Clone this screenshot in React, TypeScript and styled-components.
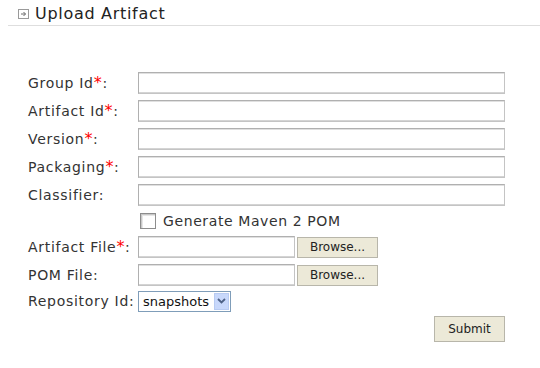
import styled, { createGlobalStyle } from "styled-components";

const GlobalStyle = createGlobalStyle`
  html, body {
    margin: 0;
    padding: 0;
    background: #ffffff;
  }
  body {
    font-family: "DejaVu Sans", Verdana, sans-serif;
    color: #333;
  }
`;

const Page = styled.div`
  width: 540px;
  height: 368px;
  padding: 0 0 0 8px;
  box-sizing: border-box;
`;

const Header = styled.div`
  display: flex;
  align-items: center;
  gap: 6px;
  height: 26px;
  padding: 3px 0 0 10px;
  box-sizing: border-box;
  border-bottom: 1px solid #dedede;
`;

const Title = styled.h2`
  margin: 0;
  font-size: 16px;
  font-weight: normal;
  letter-spacing: 0.7px;
  color: #222;
  line-height: 18px;
`;

const Form = styled.form`
  display: flex;
  flex-direction: column;
  margin-top: 43px;
  padding-left: 20px;
`;

const Row = styled.div<{ $h?: number; $pt?: number }>`
  display: grid;
  grid-template-columns: 110px 367px;
  align-items: center;
  height: ${(p) => p.$h ?? 28}px;
  padding-top: ${(p) => p.$pt ?? 0}px;
  box-sizing: border-box;
`;

const Label = styled.label`
  font-size: 14px;
  letter-spacing: 0.7px;
  color: #333;
  white-space: nowrap;
`;

const Req = styled.span`
  color: #f00;
  font-size: 16px;
  line-height: 14px;
`;

const TextInput = styled.input<{ $w?: number }>`
  box-sizing: border-box;
  width: ${(p) => p.$w ?? 367}px;
  height: 22px;
  margin: 0;
  border: 1px solid #c4c4c4;
  border-top-color: #b0b0b0;
  border-left-color: #b0b0b0;
  box-shadow: inset 0 1px 0 #e0e0e0, inset 0 -1px 0 #d4d4d4;
  background: #fff;
  font: 13px "DejaVu Sans", sans-serif;
  outline: none;
`;

const Controls = styled.div`
  display: flex;
  align-items: center;
  gap: 2px;
`;

const Button = styled.button<{ $w: number; $h: number }>`
  box-sizing: border-box;
  width: ${(p) => p.$w}px;
  height: ${(p) => p.$h}px;
  margin: 0;
  padding: 0;
  border: 1px solid #b8b6aa;
  background: #ece9d8;
  color: #222;
  font: 12px "DejaVu Sans", sans-serif;
  cursor: pointer;
`;

const CheckWrap = styled.label`
  display: flex;
  align-items: center;
  gap: 7px;
  font-size: 14px;
  letter-spacing: 0.6px;
  color: #333;
`;

const CheckBox = styled.input`
  appearance: none;
  box-sizing: border-box;
  width: 16px;
  height: 16px;
  margin: 0 0 0 2px;
  border: 1px solid #8d8d8d;
  border-radius: 0;
  background: #fff;
  box-shadow: inset 1px 1px 0 #c8c8c8, inset 2px 2px 0 #e6e6e6;
`;

const SelectBox = styled.div`
  display: flex;
  align-items: stretch;
  box-sizing: border-box;
  width: 93px;
  height: 21px;
  border: 1px solid #7f9db9;
  background: #fff;
`;

const SelectText = styled.span`
  flex: 1;
  font-size: 13px;
  line-height: 19px;
  padding-left: 4px;
  color: #111;
`;

const SelectArrow = styled.span`
  display: flex;
  align-items: center;
  justify-content: center;
  width: 15px;
  margin: 1px;
  background: #c8d8fb;
  border: 1px solid #b8cbf2;
  box-sizing: border-box;
`;

const SubmitRow = styled.div`
  display: flex;
  justify-content: flex-end;
  width: 477px;
  padding-top: 3px;
`;

const HeaderIcon = () => (
  <svg width="11" height="10" viewBox="0 0 11 10">
    <rect x="0.5" y="0.5" width="10" height="9" fill="#fff" stroke="#9a9a9a" />
    <path d="M3 5h4.5M5.5 3l2 2-2 2" fill="none" stroke="#6a6a6a" strokeWidth="1" />
  </svg>
);

const Chevron = () => (
  <svg width="9" height="6" viewBox="0 0 9 6">
    <path d="M1 1l3.5 3.5L8 1" fill="none" stroke="#4d6185" strokeWidth="1.8" />
  </svg>
);

const fields = [
  { label: "Group Id", req: true },
  { label: "Artifact Id", req: true },
  { label: "Version", req: true },
  { label: "Packaging", req: true },
  { label: "Classifier", req: false },
];

export default function App() {
  return (
    <Page>
      <GlobalStyle />
      <Header>
        <HeaderIcon />
        <Title>Upload Artifact</Title>
      </Header>
      <Form onSubmit={(e) => e.preventDefault()}>
        {fields.map((f) => (
          <Row key={f.label}>
            <Label>
              {f.label}
              {f.req && <Req>*</Req>}:
            </Label>
            <TextInput type="text" />
          </Row>
        ))}
        <Row $h={24}>
          <span />
          <CheckWrap>
            <CheckBox type="checkbox" />
            Generate Maven 2 POM
          </CheckWrap>
        </Row>
        <Row>
          <Label>
            Artifact File<Req>*</Req>:
          </Label>
          <Controls>
            <TextInput type="text" $w={157} />
            <Button type="button" $w={81} $h={21}>
              Browse...
            </Button>
          </Controls>
        </Row>
        <Row>
          <Label>POM File:</Label>
          <Controls>
            <TextInput type="text" $w={157} />
            <Button type="button" $w={81} $h={21}>
              Browse...
            </Button>
          </Controls>
        </Row>
        <Row $h={24}>
          <Label>Repository Id:</Label>
          <SelectBox>
            <SelectText>snapshots</SelectText>
            <SelectArrow>
              <Chevron />
            </SelectArrow>
          </SelectBox>
        </Row>
        <SubmitRow>
          <Button type="submit" $w={71} $h={26}>
            Submit
          </Button>
        </SubmitRow>
      </Form>
    </Page>
  );
}
